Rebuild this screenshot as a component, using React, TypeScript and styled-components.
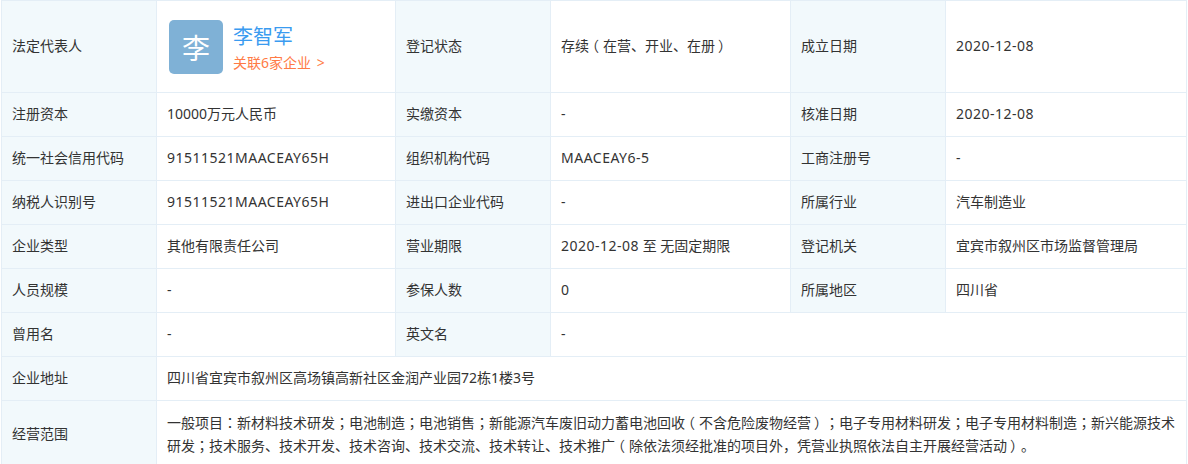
import React from "react";
import styled, { createGlobalStyle } from "styled-components";

const Global = createGlobalStyle`
  html, body { margin: 0; padding: 0; background: #fff; }
  body { font-family: "Noto Sans", "Noto Sans CJK SC", sans-serif; overflow: hidden; text-spacing-trim: space-all; }
`;

const Page = styled.div`
  width: 1188px;
  height: 464px;
  overflow: hidden;
`;

const Table = styled.table`
  width: 1186px;
  margin-left: 1px;
  border-collapse: collapse;
  table-layout: fixed;
  font-size: 14px;
  line-height: 22px;
  color: #333;
`;

const Row = styled.tr<{ $h?: number }>`
  height: ${(p) => p.$h ?? 44}px;
`;

const Label = styled.th`
  background: #f2f9fc;
  border: 1px solid #e4eef6;
  padding: 0 10px 2px;
  font-weight: 400;
  text-align: left;
  vertical-align: middle;
`;

const Value = styled.td`
  border: 1px solid #e4eef6;
  padding: 0 10px 2px;
  vertical-align: middle;
`;

const Code = styled.span`
  letter-spacing: 0.5px;
`;

const CenteredPunct = styled.span`
  font-family: "Noto Sans CJK JP", sans-serif;
`;

const Paren = styled.span`
  font-feature-settings: "halt";
  padding: 0 4px 0 3px;
`;

const ScopeLine = styled.div`
  white-space: nowrap;
`;

const Person = styled.div`
  display: flex;
  align-items: center;
  gap: 10px;
  margin: 2px 0 0 2px;
`;

const Avatar = styled.div`
  width: 54px;
  height: 54px;
  border-radius: 5px;
  background: #7fb1d6;
  color: #fff;
  font-size: 28px;
  line-height: 57px;
  text-align: center;
  flex: none;
`;

const PersonText = styled.div`
  display: flex;
  flex-direction: column;
  padding-top: 3px;
`;

const Name = styled.a`
  color: #3a9bf0;
  font-size: 20px;
  line-height: 28px;
`;

const Related = styled.a`
  color: #ff7a45;
  font-size: 14px;
  line-height: 22px;
  margin-top: 1px;
  word-spacing: 2px;
`;

const cols = [155, 239, 155, 240, 155, 241];

function Text({ children }: { children: string }) {
  const parts = children.split(/([（）：；]|\d{4}-\d{2}-\d{2}|[0-9A-Z-]*[A-Z][0-9A-Z-]*)/);
  return (
    <>
      {parts.map((p, i) => {
        if (i % 2 === 0) return p;
        if (p === "（" || p === "）") return <Paren key={i}>{p}</Paren>;
        if (p === "：" || p === "；") return <CenteredPunct key={i}>{p}</CenteredPunct>;
        return <Code key={i}>{p}</Code>;
      })}
    </>
  );
}

const rows: [string, string][][] = [
  [["注册资本", "10000万元人民币"], ["实缴资本", "-"], ["核准日期", "2020-12-08"]],
  [["统一社会信用代码", "91511521MAACEAY65H"], ["组织机构代码", "MAACEAY6-5"], ["工商注册号", "-"]],
  [["纳税人识别号", "91511521MAACEAY65H"], ["进出口企业代码", "-"], ["所属行业", "汽车制造业"]],
  [["企业类型", "其他有限责任公司"], ["营业期限", "2020-12-08 至 无固定期限"], ["登记机关", "宜宾市叙州区市场监督管理局"]],
  [["人员规模", "-"], ["参保人数", "0"], ["所属地区", "四川省"]],
];

export default function App() {
  return (
    <Page>
      <Global />
      <Table>
        <colgroup>
          {cols.map((w, i) => (
            <col key={i} style={{ width: w }} />
          ))}
        </colgroup>
        <tbody>
          <Row $h={92}>
            <Label>法定代表人</Label>
            <Value>
              <Person>
                <Avatar>李</Avatar>
                <PersonText>
                  <Name>李智军</Name>
                  <Related>关联6家企业 &gt;</Related>
                </PersonText>
              </Person>
            </Value>
            <Label>登记状态</Label>
            <Value><Text>存续（在营、开业、在册）</Text></Value>
            <Label>成立日期</Label>
            <Value><Text>2020-12-08</Text></Value>
          </Row>
          {rows.map((r, i) => (
            <Row key={i}>
              {r.map(([a, b]) => (
                <React.Fragment key={a}>
                  <Label>{a}</Label>
                  <Value><Text>{b}</Text></Value>
                </React.Fragment>
              ))}
            </Row>
          ))}
          <Row>
            <Label>曾用名</Label>
            <Value>-</Value>
            <Label>英文名</Label>
            <Value colSpan={3}>-</Value>
          </Row>
          <Row>
            <Label>企业地址</Label>
            <Value colSpan={5}>四川省宜宾市叙州区高场镇高新社区金润产业园72栋1楼3号</Value>
          </Row>
          <Row $h={68}>
            <Label>经营范围</Label>
            <Value colSpan={5}>
              <ScopeLine><Text>一般项目：新材料技术研发；电池制造；电池销售；新能源汽车废旧动力蓄电池回收（不含危险废物经营）；电子专用材料研发；电子专用材料制造；新兴能源技术</Text></ScopeLine>
              <ScopeLine><Text>研发；技术服务、技术开发、技术咨询、技术交流、技术转让、技术推广（除依法须经批准的项目外，凭营业执照依法自主开展经营活动）。</Text></ScopeLine>
            </Value>
          </Row>
        </tbody>
      </Table>
    </Page>
  );
}
